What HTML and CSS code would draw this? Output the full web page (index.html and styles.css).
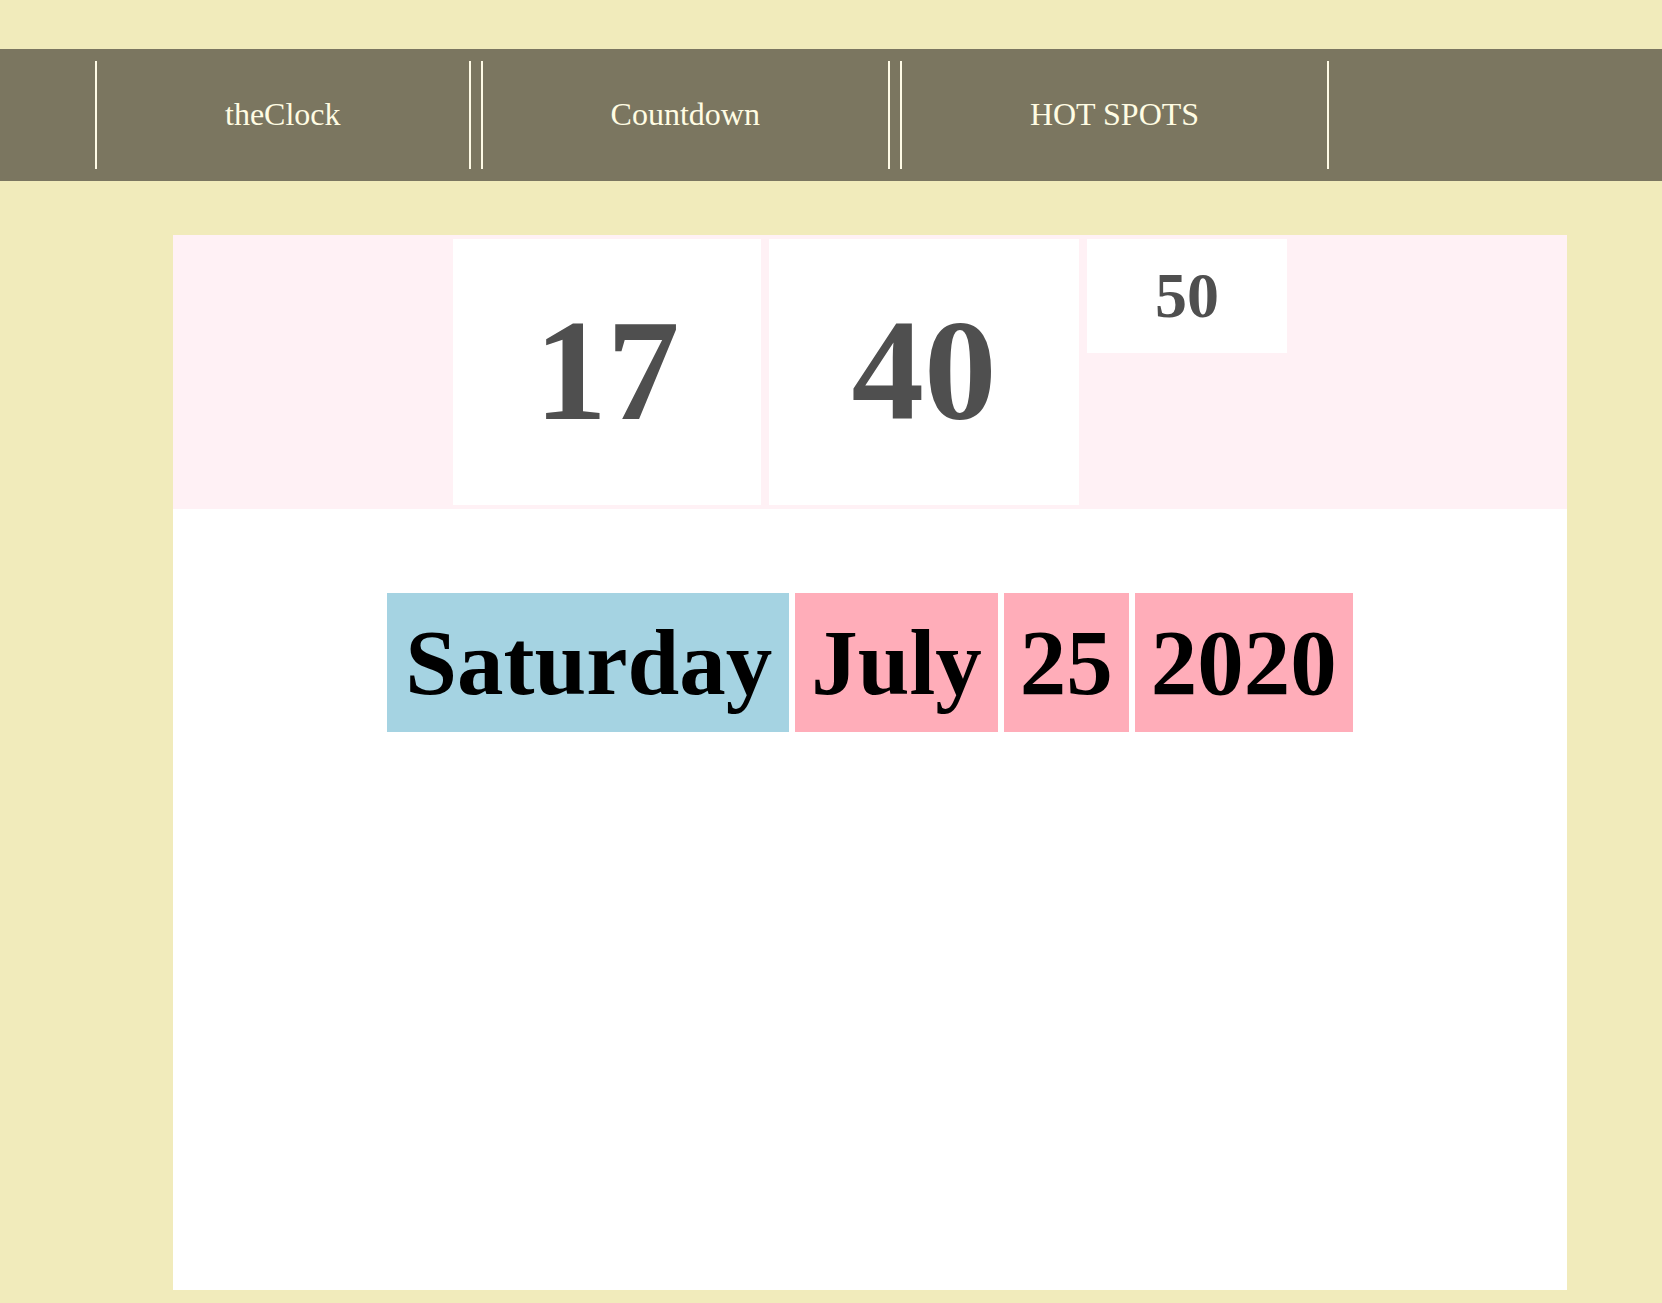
FILE: index.html
```html
<!DOCTYPE html>
<html lang="en">
<head>
<meta charset="utf-8">
<title>theClock</title>
<link rel="stylesheet" href="styles.css">
</head>
<body>
  <nav class="topnav">
    <ul class="nav-list">
      <li class="nav-item"><a class="nav-link" href="#">theClock</a></li>
      <li class="nav-item"><a class="nav-link" href="#">Countdown</a></li>
      <li class="nav-item"><a class="nav-link" href="#">HOT SPOTS</a></li>
    </ul>
  </nav>
  <main class="panel">
    <section class="clock">
      <div class="clock-box hours">17</div>
      <div class="clock-box minutes">40</div>
      <div class="clock-box seconds">50</div>
    </section>
    <section class="date">
      <span class="date-box weekday">Saturday</span>
      <span class="date-box month">July</span>
      <span class="date-box day">25</span>
      <span class="date-box year">2020</span>
    </section>
  </main>
</body>
</html>
```
FILE: styles.css
```css
html, body {
  margin: 0;
  padding: 0;
}
body {
  background: #F1EBBB;
  font-family: "Liberation Serif", "Times New Roman", serif;
  height: 1303px;
  overflow: hidden;
}
.topnav {
  margin-top: 49px;
  background: #7B7660;
  height: 132px;
  padding: 12px 0 0 95px;
  box-sizing: border-box;
}
.nav-list {
  list-style: none;
  margin: 0;
  padding: 0;
  display: flex;
  gap: 10px;
}
.nav-item {
  height: 108px;
  border-left: 2px solid #FFFBE6;
  border-right: 2px solid #FFFBE6;
  display: flex;
  align-items: center;
}
.nav-link {
  padding: 0 128px;
  font-size: 32px;
  color: #FFFCE3;
  text-decoration: none;
  position: relative;
  top: -1px;
}
.panel {
  margin: 54px 0 0 173px;
  width: 1394px;
  height: 1055px;
  background: #FFFFFF;
}
.clock {
  background: #FFF1F5;
  padding: 4px 0;
  display: flex;
  justify-content: center;
  align-items: flex-start;
  gap: 8px;
}
.clock-box {
  background: #FFFFFF;
  color: #4F4F4F;
  font-weight: bold;
  display: flex;
  align-items: center;
  justify-content: center;
}
.hours, .minutes {
  height: 266px;
  font-size: 145px;
  padding-bottom: 4px;
  box-sizing: border-box;
}
.hours { width: 308px; }
.minutes { width: 310px; }
.seconds {
  width: 200px;
  height: 114px;
  font-size: 64px;
}
.date {
  margin-top: 84px;
  display: flex;
  justify-content: center;
  gap: 6px;
}
.date-box {
  padding: 16px;
  font-size: 93px;
  font-weight: bold;
  color: #000000;
  line-height: 107px;
}
.weekday { background: #A5D3E2; padding: 16px 17px 16px 18px; }
.month, .day, .year { background: #FFADB9; }
```
